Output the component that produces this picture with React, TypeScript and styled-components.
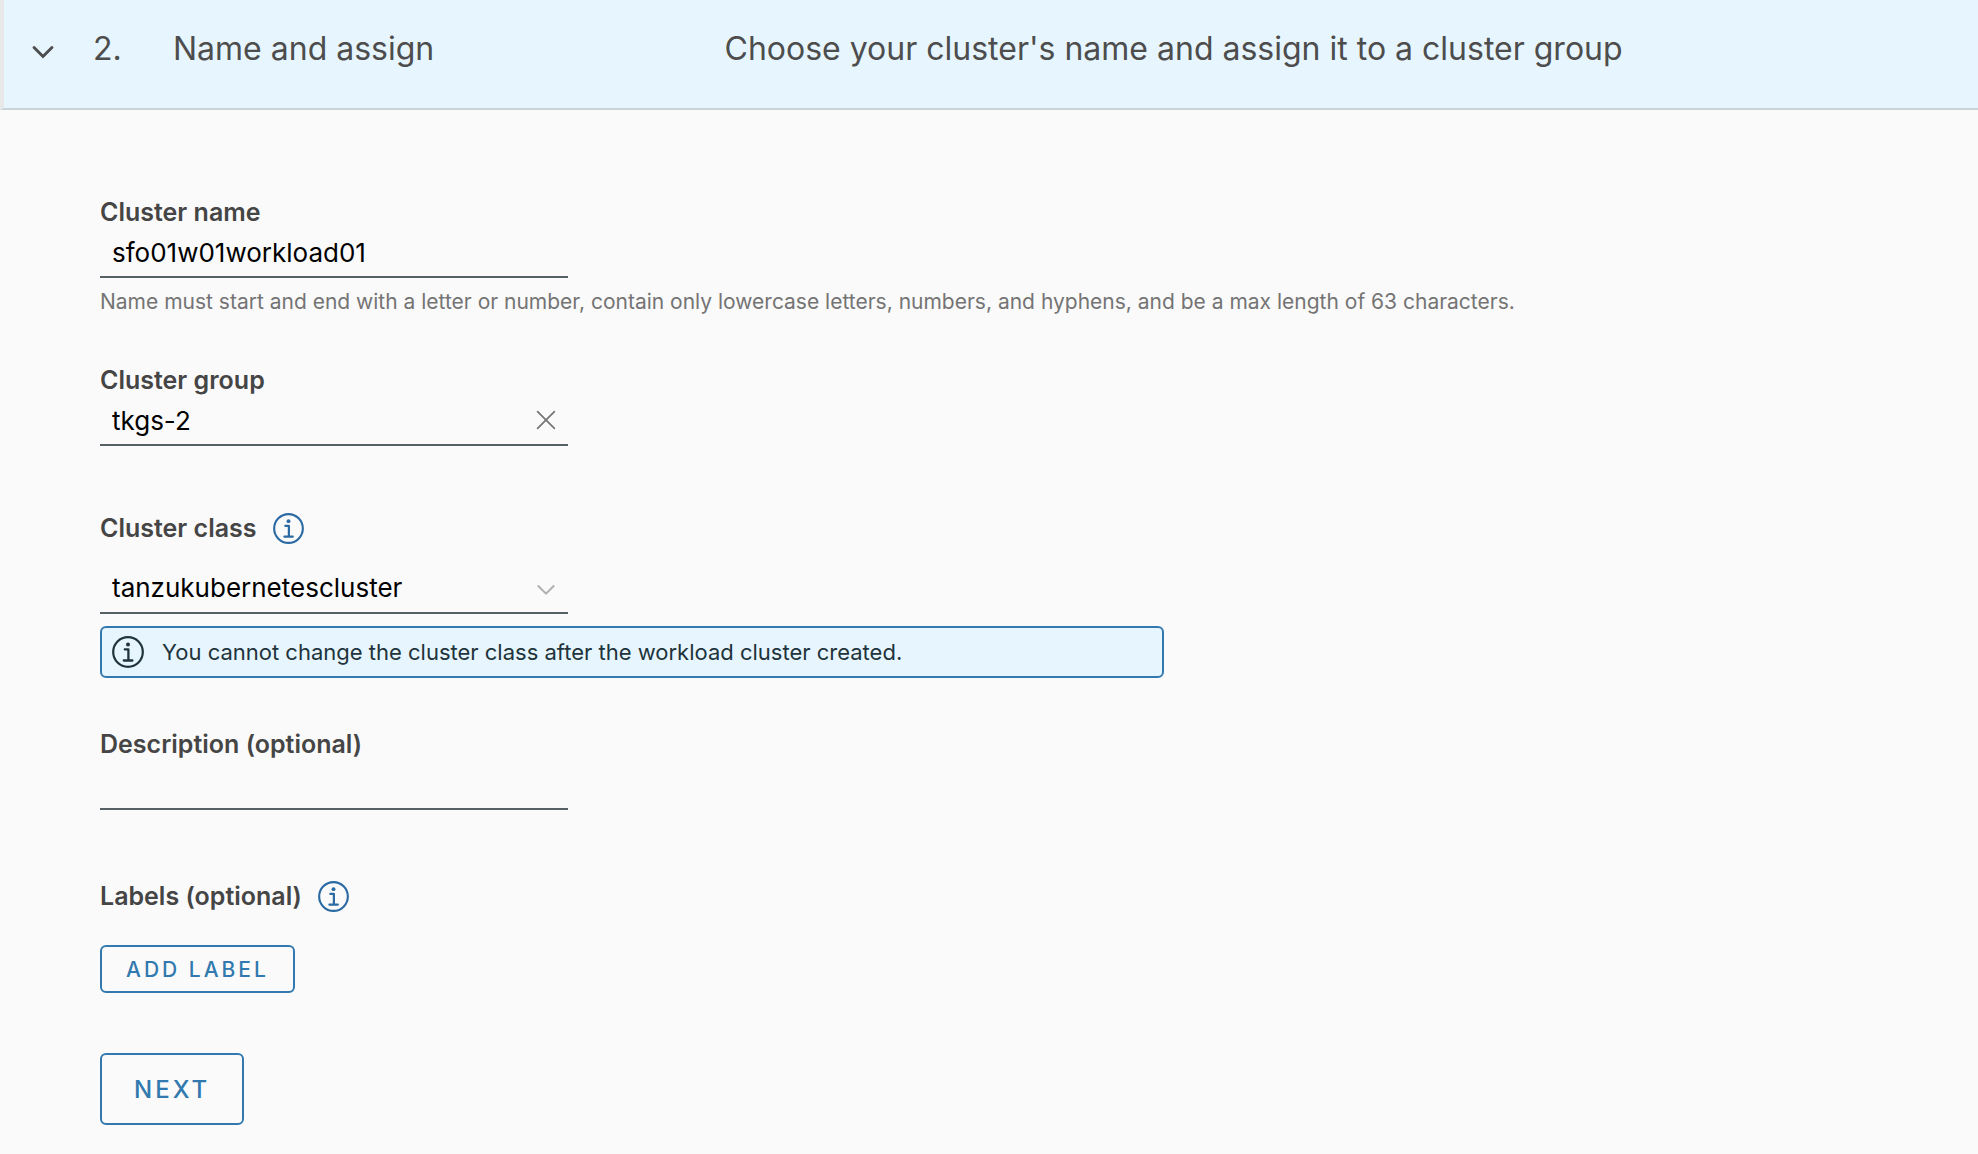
import React, { useState } from "react";
import styled, { createGlobalStyle } from "styled-components";

const color = {
  page: "#fafafa",
  tint: "#e7f6fe",
  rail: "#e8e8e8",
  divider: "#c9d4da",
  heading: "#4d4d4d",
  label: "#454545",
  hint: "#747474",
  line: "#565f64",
  link: "#2b6aa3",
  action: "#3179ae",
  alertText: "#21333b",
};

const GlobalStyle = createGlobalStyle`
  *, *::before, *::after { box-sizing: border-box; }
  body {
    margin: 0;
    background: ${color.page};
    color: ${color.heading};
    font-family: Inter, "Open Sans", "Liberation Sans", sans-serif;
  }
  button, input, select { font: inherit; }
`;

const StepHeader = styled.button`
  display: grid;
  grid-template-columns: 64px 80px minmax(0, 11fr) minmax(0, 25fr);
  width: 100%;
  padding: 29px 0 39px 25px;
  border: 0;
  border-left: 4px solid ${color.rail};
  border-bottom: 2px solid ${color.divider};
  background: ${color.tint};
  color: ${color.heading};
  font-size: 32px;
  line-height: 40px;
  text-align: left;
  cursor: pointer;
`;

const ChevronSlot = styled.span`
  display: flex;
  align-items: center;
  padding-top: 4px;
`;

const Panel = styled.form`
  display: flex;
  flex-direction: column;
  align-items: flex-start;
  padding: 86px 100px 28px;
`;

const Field = styled.div<{ $after: number }>`
  display: flex;
  flex-direction: column;
  width: 100%;
  margin-bottom: ${(p) => p.$after}px;
`;

const LabelRow = styled.div<{ $after?: number }>`
  display: flex;
  align-items: center;
  gap: 16px;
  margin-bottom: ${(p) => p.$after ?? 0}px;
`;

const labelText = `
  color: ${color.label};
  font-size: 25px;
  font-weight: 600;
  line-height: 32px;
`;

const Label = styled.label`
  ${labelText}
`;

const GroupTitle = styled.span`
  ${labelText}
`;

const ControlBox = styled.div`
  display: flex;
  align-items: center;
  width: 468px;
  max-width: 100%;
  height: 50px;
  border-bottom: 2px solid ${color.line};
`;

const controlText = `
  flex: 1;
  min-width: 0;
  height: 48px;
  padding: 0 12px;
  border: 0;
  border-radius: 0;
  outline: 0;
  background: transparent;
  color: #000;
  font-size: 26px;
  line-height: 32px;
`;

const TextInput = styled.input`
  ${controlText}
`;

const Select = styled.select`
  ${controlText}
  appearance: none;
  margin-right: -44px;
  padding-right: 44px;
`;

const SelectArrow = styled.span`
  display: flex;
  padding: 2px 10px 0;
  pointer-events: none;
`;

const IconButton = styled.button<{ $inset?: number }>`
  display: flex;
  padding: 0 ${(p) => p.$inset ?? 0}px;
  border: 0;
  background: none;
  cursor: pointer;
`;

const Hint = styled.p`
  margin: 8px 0 0;
  color: ${color.hint};
  font-size: 21px;
  line-height: 32px;
`;

const Alert = styled.div`
  display: flex;
  align-items: center;
  gap: 18px;
  width: 1064px;
  max-width: 100%;
  min-height: 52px;
  margin-top: 12px;
  padding: 0 10px;
  border: 2px solid ${color.action};
  border-radius: 6px;
  background: ${color.tint};
  color: ${color.alertText};
  font-size: 22px;
  line-height: 32px;
`;

const Action = styled.button<{ $large?: boolean }>`
  height: ${(p) => (p.$large ? 72 : 48)}px;
  padding: 0 ${(p) => (p.$large ? 32 : 24)}px;
  border: 2px solid ${color.action};
  border-radius: 6px;
  background: transparent;
  color: ${color.action};
  font-size: ${(p) => (p.$large ? 24 : 21)}px;
  font-weight: 500;
  letter-spacing: 3px;
  text-transform: uppercase;
  cursor: pointer;
`;

function Chevron({ size, stroke, width }: { size: number; stroke: string; width: number }) {
  return (
    <svg width={size} height={size} viewBox="0 0 36 36" fill="none" aria-hidden="true">
      <path
        d="M6.5 13.5 18 25 29.5 13.5"
        stroke={stroke}
        strokeWidth={width}
        strokeLinecap="round"
        strokeLinejoin="miter"
      />
    </svg>
  );
}

function InfoIcon({ size, stroke }: { size: number; stroke: string }) {
  return (
    <svg width={size} height={size} viewBox="0 0 32 32" fill="none" aria-hidden="true">
      <circle cx="16" cy="16" r="14.8" stroke={stroke} strokeWidth="2.2" />
      <circle cx="16" cy="8.4" r="2" fill={stroke} />
      <path
        d="M12.8 13.4h3.6v11M11.8 24.5h8.6"
        stroke={stroke}
        strokeWidth="2.3"
        strokeLinecap="round"
        strokeLinejoin="round"
      />
    </svg>
  );
}

function CloseIcon() {
  return (
    <svg width="20" height="20" viewBox="0 0 20 20" aria-hidden="true">
      <path d="M1.6 1.6 18.4 18.4M18.4 1.6 1.6 18.4" stroke="#747474" strokeWidth="1.7" strokeLinecap="round" />
    </svg>
  );
}

export default function App() {
  const [name, setName] = useState("sfo01w01workload01");
  const [group, setGroup] = useState("tkgs-2");
  const [description, setDescription] = useState("");
  const [open, setOpen] = useState(true);

  return (
    <>
      <GlobalStyle />
      <main>
        <StepHeader type="button" aria-expanded={open} onClick={() => setOpen(!open)}>
          <ChevronSlot>
            <Chevron size={28} stroke={color.heading} width={3.8} />
          </ChevronSlot>
          <span>2.</span>
          <span>Name and assign</span>
          <span>Choose your cluster's name and assign it to a cluster group</span>
        </StepHeader>
        {open && (
          <Panel onSubmit={(e) => e.preventDefault()}>
            <Field $after={46}>
              <Label htmlFor="cluster-name">Cluster name</Label>
              <ControlBox>
                <TextInput
                  id="cluster-name"
                  aria-describedby="cluster-name-hint"
                  value={name}
                  onChange={(e) => setName(e.target.value)}
                />
              </ControlBox>
              <Hint id="cluster-name-hint">
                Name must start and end with a letter or number, contain only lowercase letters, numbers, and
                hyphens, and be a max length of 63 characters.
              </Hint>
            </Field>

            <Field $after={66}>
              <Label htmlFor="cluster-group">Cluster group</Label>
              <ControlBox>
                <TextInput id="cluster-group" value={group} onChange={(e) => setGroup(e.target.value)} />
                <IconButton type="button" $inset={12} aria-label="Clear cluster group" onClick={() => setGroup("")}>
                  <CloseIcon />
                </IconButton>
              </ControlBox>
            </Field>

            <Field $after={50}>
              <LabelRow $after={20}>
                <Label htmlFor="cluster-class">Cluster class</Label>
                <IconButton type="button" aria-label="About cluster class">
                  <InfoIcon size={31} stroke={color.link} />
                </IconButton>
              </LabelRow>
              <ControlBox>
                <Select id="cluster-class" defaultValue="tanzukubernetescluster">
                  <option>tanzukubernetescluster</option>
                </Select>
                <SelectArrow>
                  <Chevron size={24} stroke="#b0b0b0" width={3} />
                </SelectArrow>
              </ControlBox>
              <Alert role="note">
                <InfoIcon size={32} stroke={color.alertText} />
                <span>You cannot change the cluster class after the workload cluster created.</span>
              </Alert>
            </Field>

            <Field $after={70}>
              <Label htmlFor="description">Description (optional)</Label>
              <ControlBox>
                <TextInput
                  id="description"
                  value={description}
                  onChange={(e) => setDescription(e.target.value)}
                />
              </ControlBox>
            </Field>

            <Field $after={33}>
              <LabelRow>
                <GroupTitle>Labels (optional)</GroupTitle>
                <IconButton type="button" aria-label="About labels">
                  <InfoIcon size={31} stroke={color.link} />
                </IconButton>
              </LabelRow>
            </Field>
            <Field $after={60}>
              <div>
                <Action type="button">Add label</Action>
              </div>
            </Field>
            <Action type="submit" $large>
              Next
            </Action>
          </Panel>
        )}
      </main>
    </>
  );
}
